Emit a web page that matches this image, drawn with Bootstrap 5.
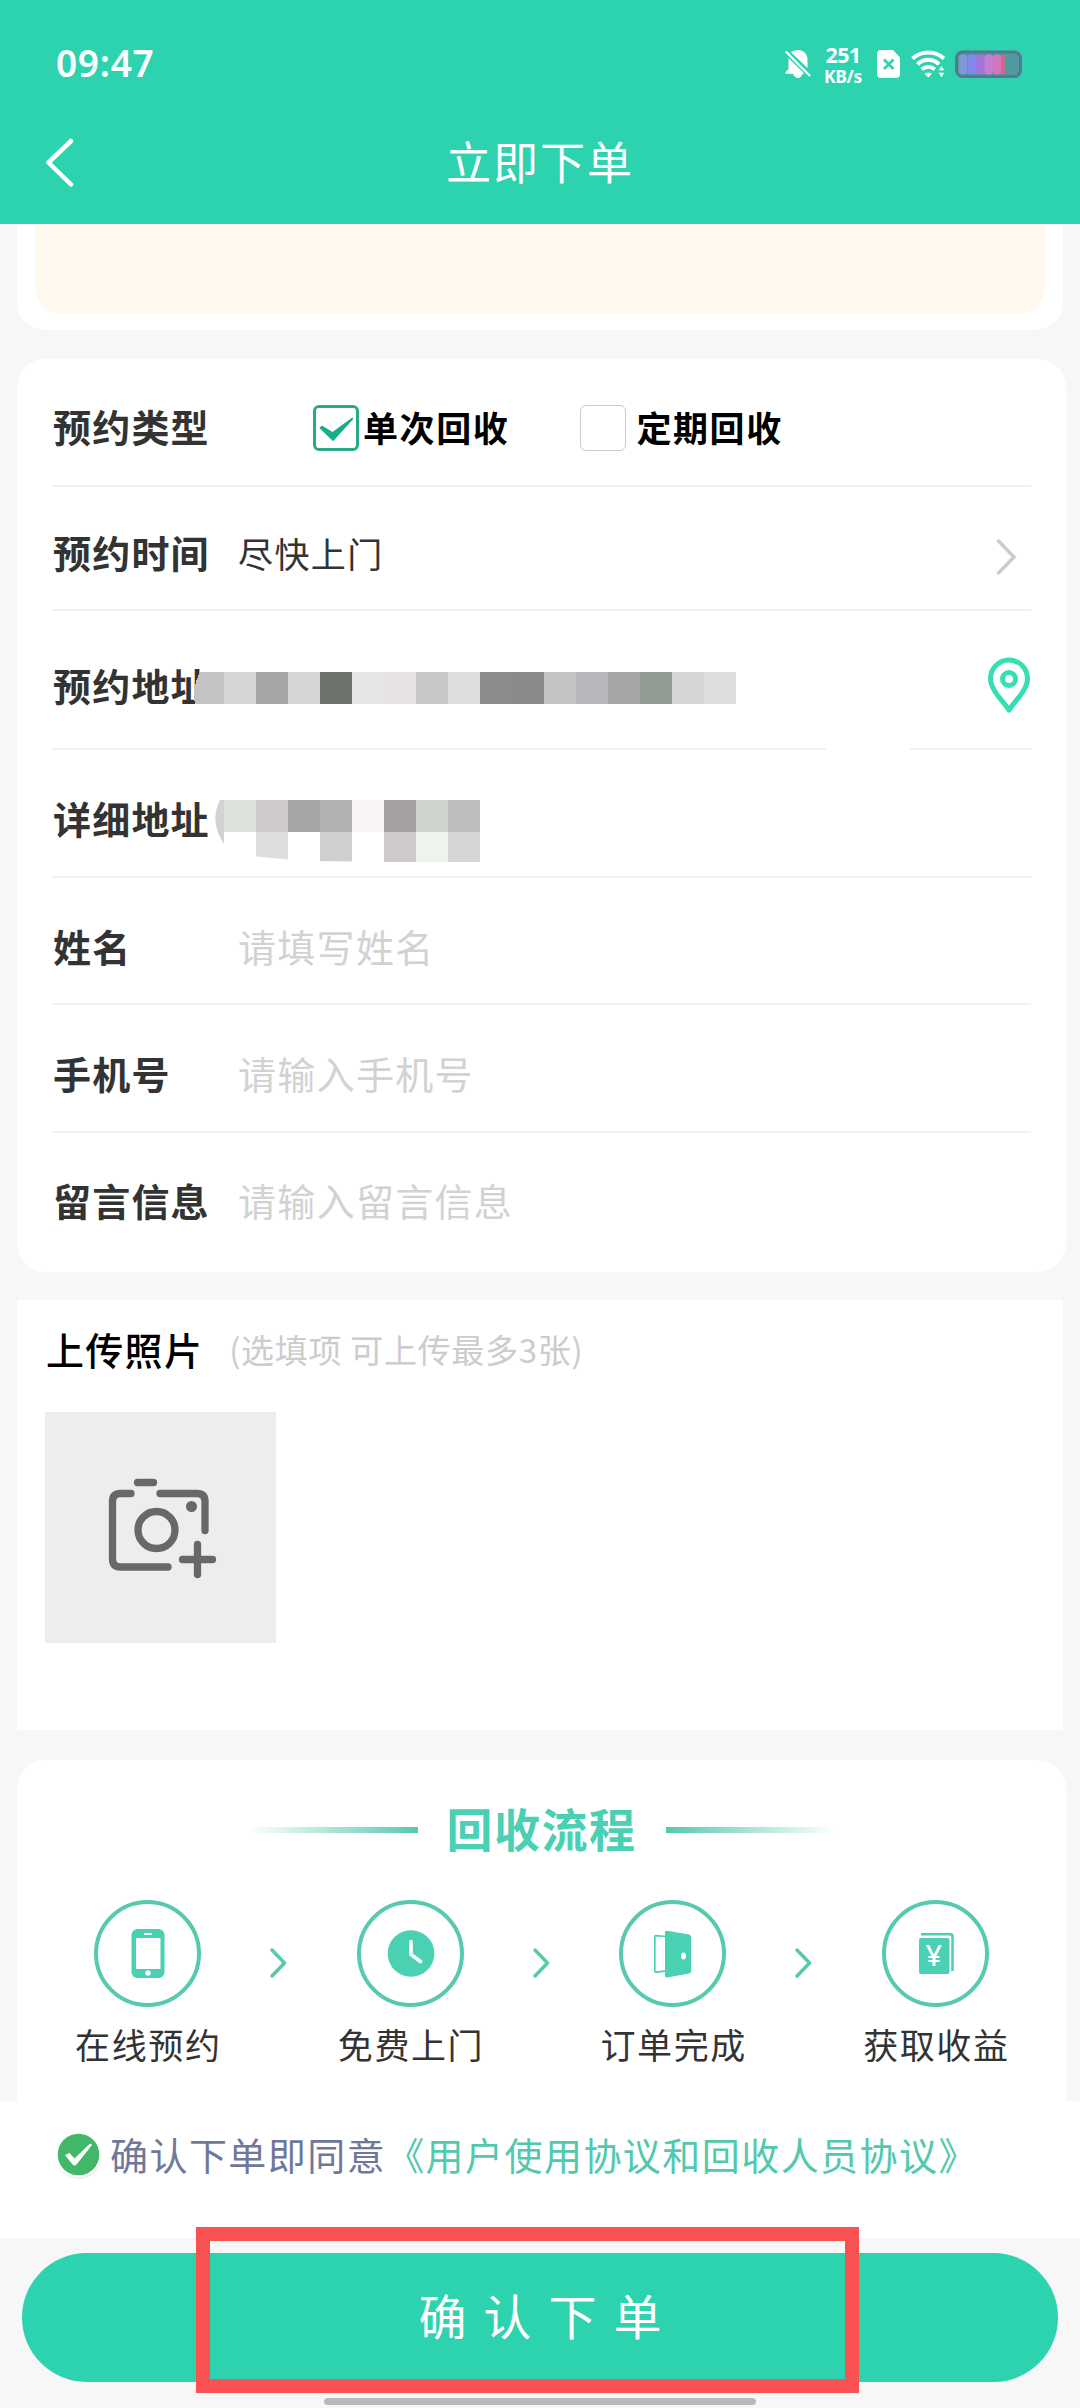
<!DOCTYPE html>
<html lang="zh-CN">
<head>
<meta charset="utf-8">
<meta name="viewport" content="width=device-width, initial-scale=1">
<title>立即下单</title>
<link href="https://cdn.jsdelivr.net/npm/bootstrap@5.3.0/dist/css/bootstrap.min.css" rel="stylesheet">
<style>
  :root { --mint: #2dd3ae; --mint-soft: #4ad0b2; --page: #f7f7f7; }
  body { width: 1080px; height: 2408px; background: var(--page); font-family: "Noto Sans CJK SC", sans-serif; line-height: 1; color: #333; overflow: hidden; }
  svg { display: block; flex: none; }
  .topbar { height: 224px; background: var(--mint); }
  .status { height: 128px; padding: 0 57px 0 56px; }
  .clock { font: 600 37px/1 "Noto Sans", sans-serif; letter-spacing: .7px; padding-bottom: 4px; }
  .speed { width: 40px; margin: 0 14px 0 12px; }
  .speed div { font: 700 21.5px/24px "Noto Sans", sans-serif; letter-spacing: -.6px; }
  .speed .unit { font-size: 17.5px; line-height: 18px; letter-spacing: -.3px; }
  .titlebar { height: 96px; padding-left: 44px; }
  .titlebar h1 { font-size: 45px; letter-spacing: 2px; line-height: 1; left: 0; right: 0; top: 10px; }
  .panel { margin-left: 17px; background: #fff; }
  .promo { width: 1046px; height: 106px; border-radius: 0 0 28px 28px; padding: 0 18px 16px; }
  .promo div { background: #fff8ec; border-radius: 0 0 26px 26px; }
  .form-panel { width: 1049px; height: 913px; margin-top: 29px; border-radius: 28px; padding: 0 35px; }
  .line-row { height: 128px; border-bottom: 2px solid #f0f0f0; padding: 8px 0 0 1px; font-size: 38px; letter-spacing: 1.2px; }
  .line-row > label { width: 185px; font-weight: 700; color: #333; flex: none; }
  .line-row .hint { color: #d2d2d2; letter-spacing: 1.3px; }
  .row-time { height: 124px; }
  .row-address { height: 139px; padding-top: 9px; border: 0; }
  .row-detail, .row-name, .row-phone { padding-top: 10px; }
  .row-name { height: 127px; }
  .row-note { height: 139px; border: 0; padding: 0 0 5px 1px; }
  .split-rule { height: 2px; margin-top: -2px; }
  .split-rule i { background: #f0f0f0; height: 2px; }
  .choice { font-size: 35px; letter-spacing: 1.6px; font-weight: 700; color: #000; }
  .first-choice { margin-left: 75px; }
  .second-choice { margin-left: 71px; }
  .tick { width: 46px; height: 46px; border-radius: 6px; border: 1px solid #ccc; margin-top: 4px; }
  .tick.on { border: 3px solid #2ba88a; }
  .value { font-size: 35px; letter-spacing: 1.4px; }
  .mosaic { position: absolute; }
  .mosaic-a { left: 139px; top: 61px; }
  .mosaic-b { left: 162px; top: 50px; }
  .upload { width: 1046px; height: 430px; margin-top: 28px; padding: 30px 28px 0; }
  .upload h2 { font-size: 38px; letter-spacing: 1.3px; font-weight: 500; color: #000; line-height: 1; margin: 0 0 0 1px; }
  .upload span { font-size: 33px; color: #ccc; letter-spacing: .7px; margin-left: 26px; }
  .drop { width: 231px; height: 231px; background: #ededed; margin-top: 44px; }
  .flow { width: 1049px; height: 341px; margin-top: 30px; border-radius: 28px 28px 0 0; padding-top: 44px; }
  .flow h2 { font-size: 46px; letter-spacing: 1.5px; font-weight: 700; color: var(--mint-soft); line-height: 1; margin: 0 29px; }
  .fade-l, .fade-r { width: 170px; height: 6px; margin-top: 5px; background: linear-gradient(90deg, #fff, #56c9ae); }
  .fade-r { background: linear-gradient(270deg, #fff, #56c9ae); }
  .steps { padding: 0 0 0 49px; margin-top: 50px; }
  .step { width: 163px; flex: none; }
  .ring { width: 107px; height: 107px; border: 4px solid #56c9ae; border-radius: 50%; }
  .step p { font-size: 35px; letter-spacing: 1.6px; line-height: 1; margin: 19px -1.6px 0 0; color: #333; white-space: nowrap; }
  .sep { width: 99.7px; flex: none; padding: 46px 2px 0 0; }
  .agree { height: 137px; background: #fff; padding: 0 0 32px 56px; font-size: 38px; letter-spacing: 1.45px; color: #70789a; white-space: nowrap; }
  .agree a { color: #50c9ad; text-decoration: none; }
  .submit-area { height: 170px; padding: 15px 22px 0; }
  .submit-area .btn { height: 129px; background: var(--mint); color: #fff; font-size: 48px; letter-spacing: 17px; padding: 0 0 8px 17px; border: 0; line-height: 1; }
  .highlight { position: absolute; left: 196px; top: -11px; width: 663px; height: 166px; border: 14px solid #fa5252; }
  .homebar { position: absolute; left: 324px; bottom: 3px; width: 432px; height: 7px; border-radius: 4px; background: #bababa; }
</style>
</head>
<body>
<header class="topbar text-white">
  <div class="status d-flex align-items-center">
    <div class="clock me-auto">09:47</div>
    <svg width="26" height="28" viewBox="0 0 26 28">
      <path fill="#fff" d="M7 1.600C9 .6 11 0 13 0c6 0 9.500 4.500 9.500 9v9L6 2.200zM3.500 8 19.500 23.800H17.500c-.5 2.700-2.500 4.200-4.500 4.200s-4.500-1.500-5-4.200H0.500v-1.500L3.500 19z"/>
      <path stroke="#fff" stroke-width="2.200" d="M.8 1.500 25 26"/>
    </svg>
    <div class="speed text-center"><div>251</div><div class="unit">KB/s</div></div>
    <svg width="23" height="28" viewBox="0 0 23 28">
      <path fill="#fff" d="M4 0h12l7 7.500V24a4 4 0 0 1-4 4H4a4 4 0 0 1-4-4V4a4 4 0 0 1 4-4z"/>
      <path stroke="#2dd3ae" stroke-width="2.600" d="m7 9.500 9.500 9.500m0-9.500L7 19"/>
    </svg>
    <svg style="margin-left:11px" width="35" height="28" viewBox="0 0 35 28">
      <g fill="none" stroke="#fff" stroke-width="4">
        <path d="M1.500 8.500c9-8 22.500-8 31.500 0"/>
        <path d="M6.500 14.200c6.200-5.800 15.300-5.800 21.500 0"/>
        <path d="M10.800 19.600c4-3.600 9-3.600 13 0"/>
      </g>
      <path fill="#fff" stroke="#2dd3ae" stroke-width=".8" d="M13 23.500c2.500-1.700 6-1.700 8.500 0L17.300 28zM27 20.800l3.500-5.300 3.500 5.300zM27 22.300h7l-3.500 5.700z"/>
    </svg>
    <svg style="margin-left:9px" width="68" height="28" viewBox="0 0 68 28">
      <rect x="1.500" y="2" width="64" height="24.500" rx="6" fill="#4f99a0" stroke="#5a7690" stroke-width="3"/>
      <rect x="4" y="4.500" width="8" height="20" rx="3.500" fill="#7b9ad6"/>
      <rect x="12.500" y="4.500" width="9" height="20" rx="3.500" fill="#8388ee"/>
      <rect x="21" y="4.500" width="9" height="20" rx="3.500" fill="#a077da"/>
      <rect x="29.500" y="4.500" width="8.500" height="20" rx="3.500" fill="#c680d0"/>
      <rect x="38" y="4.500" width="8.500" height="20" rx="3.500" fill="#d873bd"/>
      <path d="M51 4.500h-1.500a3.500 3.500 0 0 0-3 3.500v13a3.500 3.500 0 0 0 3 3.500H51z" fill="#c66c8b"/>
    </svg>
  </div>
  <div class="titlebar position-relative">
    <svg width="32" height="59" viewBox="0 -9 32 59"><path d="M27 4 4.500 25.500 27 47.500" fill="none" stroke="#fff" stroke-width="4.500" stroke-linecap="round" stroke-linejoin="round"/></svg>
    <h1 class="position-absolute text-center fw-normal m-0">立即下单</h1>
  </div>
</header>

<main>
  <section class="panel promo"><div class="h-100"></div></section>

  <section class="panel form-panel">
    <div class="line-row d-flex align-items-center">
      <label>预约类型</label>
      <div class="choice first-choice d-flex align-items-center">
        <div class="tick on"><svg width="40" height="40" viewBox="0 0 41 41"><path fill="#17ad88" d="M3.500 20.500 6 18 17 24.500 37.500 9.500 38 11.500 17.500 34z"/></svg></div>
        <span class="ms-1">单次回收</span>
      </div>
      <div class="choice second-choice d-flex align-items-center">
        <div class="tick"></div><span style="margin-left:10px">定期回收</span>
      </div>
    </div>
    <div class="line-row row-time d-flex align-items-center">
      <label>预约时间</label><span class="value">尽快上门</span>
      <svg class="ms-auto" width="22" height="46" viewBox="0 -8 22 46" style="margin-right:13px"><path d="m2.500 4 15.500 16L2.500 36" fill="none" stroke="#ccc" stroke-width="3.500" stroke-linecap="round"/></svg>
    </div>
    <div class="line-row row-address d-flex align-items-center position-relative">
      <label>预约地址</label>
      <svg class="mosaic mosaic-a" width="548" height="32" viewBox="191 0 548 32" shape-rendering="crispEdges">
        <path fill="#c5c2c6" d="M200 0h24v32h-29q-4-15 5-32z"/>
        <path fill="#d6d6d6" d="M224 0h32v32h-32zM288 0h32v32h-32zM672 0h32v32h-32z"/>
        <path fill="#a5a5a5" d="M256 0h32v32h-32zM608 0h32v32h-32z"/>
        <path fill="#6b736b" d="M320 0h32v32h-32z"/><path fill="#e6e6e6" d="M352 0h32v32h-32z"/>
        <path fill="#e7e2e6" d="M384 0h32v32h-32z"/><path fill="#c6c7c6" d="M416 0h32v32h-32z"/>
        <path fill="#dedede" d="M448 0h32v32h-32zM704 0h32v32h-32z"/>
        <path fill="#8a8d89" d="M480 0h32v32h-32z"/><path fill="#8b888b" d="M512 0h32v32h-32z"/>
        <path fill="#c5c2c6" d="M544 0h32v32h-32z"/><path fill="#bab7bc" d="M576 0h32v32h-32z"/>
        <path fill="#929b92" d="M640 0h32v32h-32z"/>
      </svg>
      <svg class="ms-auto" width="44" height="56" viewBox="0 0 44 56">
        <path d="M22 53C16 44 3.500 33 3.500 21.500a18.500 18.500 0 0 1 37 0C40.500 33 28 44 22 53z" fill="none" stroke="#33dfb3" stroke-width="5" stroke-linejoin="round"/>
        <circle cx="22" cy="22" r="6.500" fill="none" stroke="#33dfb3" stroke-width="5"/>
      </svg>
    </div>
    <div class="split-rule d-flex justify-content-between"><i style="width:774px"></i><i style="width:121px"></i></div>
    <div class="line-row row-detail d-flex align-items-center position-relative">
      <label>详细地址</label>
      <svg class="mosaic mosaic-b" width="268" height="63" viewBox="214 0 268 63">
        <path fill="#d4d1d4" d="M220 0h4v44q-15-22-4-44z"/>
        <path fill="#dde3dc" d="M224 0h32v32h-32z"/><path fill="#cecace" d="M256 0h32v32h-32zM384 32h32v30h-32z"/>
        <path fill="#a5a5a5" d="M288 0h32v32h-32z"/><path fill="#b3b0b3" d="M320 0h32v32h-32z"/>
        <path fill="#f7f3f7" d="M352 0h32v32h-32z"/><path fill="#a39fa3" d="M384 0h32v32h-32z"/>
        <path fill="#ced3cd" d="M416 0h32v32h-32z"/><path fill="#bdbdbd" d="M448 0h32v32h-32z"/>
        <path fill="#dedede" d="M256 32h32v27.500l-32-3z"/><path fill="#cecfce" d="M320 32h32v29.500l-32-.5z"/>
        <path fill="#eef3ee" d="M416 32h32v30h-32z"/><path fill="#d6d6d6" d="M448 32h32v30h-32z"/>
      </svg>
    </div>
    <div class="line-row row-name d-flex align-items-center"><label>姓名</label><span class="hint">请填写姓名</span></div>
    <div class="line-row row-phone d-flex align-items-center"><label>手机号</label><span class="hint">请输入手机号</span></div>
    <div class="line-row row-note d-flex align-items-center"><label>留言信息</label><span class="hint">请输入留言信息</span></div>
  </section>

  <section class="panel upload">
    <div class="d-flex align-items-center"><h2>上传照片</h2><span>(选填项 可上传最多3张)</span></div>
    <div class="drop">
      <svg width="231" height="231" viewBox="45 1412 231 231" fill="none" stroke="#686868" stroke-width="7.300" stroke-linecap="round">
        <path d="M137.500 1482.500h16M131 1493.500h-10.500q-8 0-8 8v57.500q0 8 8 8H168M160 1493.500h37q8 0 8 8v29"/>
        <circle cx="156.500" cy="1530" r="18.500"/><circle cx="191.500" cy="1506.500" r="5.500" fill="#686868" stroke="none"/>
        <path d="M182.500 1559.500h30M197.500 1544.500v30"/>
      </svg>
    </div>
  </section>

  <section class="panel flow">
    <div class="d-flex align-items-center justify-content-center"><i class="fade-l"></i><h2>回收流程</h2><i class="fade-r"></i></div>
    <div class="steps d-flex">
      <div class="step d-flex flex-column align-items-center">
        <div class="ring d-flex align-items-center justify-content-center">
          <svg width="99" height="99" viewBox="98 1904 99 99"><rect x="131.500" y="1929" width="33" height="49" rx="6" fill="#4ad0b2"/><path fill="#fff" d="M136 1938h24.500v31H136zM144 1933h8v2h-8z"/><circle cx="148" cy="1973" r="2.700" fill="#fff"/></svg>
        </div><p>在线预约</p>
      </div>
      <div class="sep"><svg class="mx-auto" width="22" height="34" viewBox="0 0 22 34"><path d="m5 4 12.500 13L5 30" fill="none" stroke="#56c9ae" stroke-width="3.500" stroke-linecap="round" stroke-linejoin="round"/></svg></div>
      <div class="step d-flex flex-column align-items-center">
        <div class="ring d-flex align-items-center justify-content-center">
          <svg width="99" height="99" viewBox="361 1904 99 99"><circle cx="411" cy="1953.500" r="23.300" fill="#4ad0b2"/><path d="M411 1941.500v13l9.500 7" fill="none" stroke="#fff" stroke-width="3.700" stroke-linecap="round" stroke-linejoin="round"/></svg>
        </div><p>免费上门</p>
      </div>
      <div class="sep"><svg class="mx-auto" width="22" height="34" viewBox="0 0 22 34"><path d="m5 4 12.500 13L5 30" fill="none" stroke="#56c9ae" stroke-width="3.500" stroke-linecap="round" stroke-linejoin="round"/></svg></div>
      <div class="step d-flex flex-column align-items-center">
        <div class="ring d-flex align-items-center justify-content-center">
          <svg width="99" height="99" viewBox="623 1904 99 99"><path d="M665.500 1936.500 656 1935.700q-1.200 0-1.200 1.200v34q0 1.200 1.200 1.200l9.500-1" fill="none" stroke="#4ad0b2" stroke-width="1.700"/><path fill="#4ad0b2" d="M665 1932.500q0-2 2-1.700l22 3.700q2.200.5 2.200 2.500v34q0 2-2.200 2.500l-22 4q-2 .3-2-1.700z"/><ellipse cx="683.500" cy="1956" rx="2.500" ry="3.500" fill="#fff"/></svg>
        </div><p>订单完成</p>
      </div>
      <div class="sep"><svg class="mx-auto" width="22" height="34" viewBox="0 0 22 34"><path d="m5 4 12.500 13L5 30" fill="none" stroke="#56c9ae" stroke-width="3.500" stroke-linecap="round" stroke-linejoin="round"/></svg></div>
      <div class="step d-flex flex-column align-items-center">
        <div class="ring d-flex align-items-center justify-content-center">
          <svg width="99" height="99" viewBox="886 1904 99 99"><path d="M921 1934.300h29.500q2 0 2 2V1971" fill="none" stroke="#4ad0b2" stroke-width="2.500"/><rect x="919" y="1938" width="30.500" height="36" rx="2" fill="#4ad0b2"/><text x="933.800" y="1966" text-anchor="middle" font-family="Noto Sans" font-weight="500" font-size="29" fill="#fff">¥</text></svg>
        </div><p>获取收益</p>
      </div>
    </div>
  </section>

  <div class="agree d-flex align-items-center">
    <svg width="46" height="54" viewBox="0 -4 46 54" style="margin-right:8px">
      <circle cx="23" cy="25.500" r="22.500" fill="#efefef"/><circle cx="22.500" cy="23.500" r="22.800" fill="#fff"/>
      <circle cx="22.500" cy="23.500" r="20.800" fill="#41b767"/>
      <path d="m9 24 4.500-2 5 5.500L33.500 13q2.500-1 2.500 1L20.500 33.500q-2 2.200-4 0z" fill="#fff"/>
    </svg>
    <span>确认下单即同意<a href="#">《用户使用协议和回收人员协议》</a></span>
  </div>
</main>

<footer class="submit-area position-relative">
  <button class="btn rounded-pill w-100">确认下单</button>
  <div class="highlight"></div>
  <div class="homebar"></div>
</footer>
<script src="https://cdn.jsdelivr.net/npm/bootstrap@5.3.0/dist/js/bootstrap.bundle.min.js"></script>
</body>
</html>
